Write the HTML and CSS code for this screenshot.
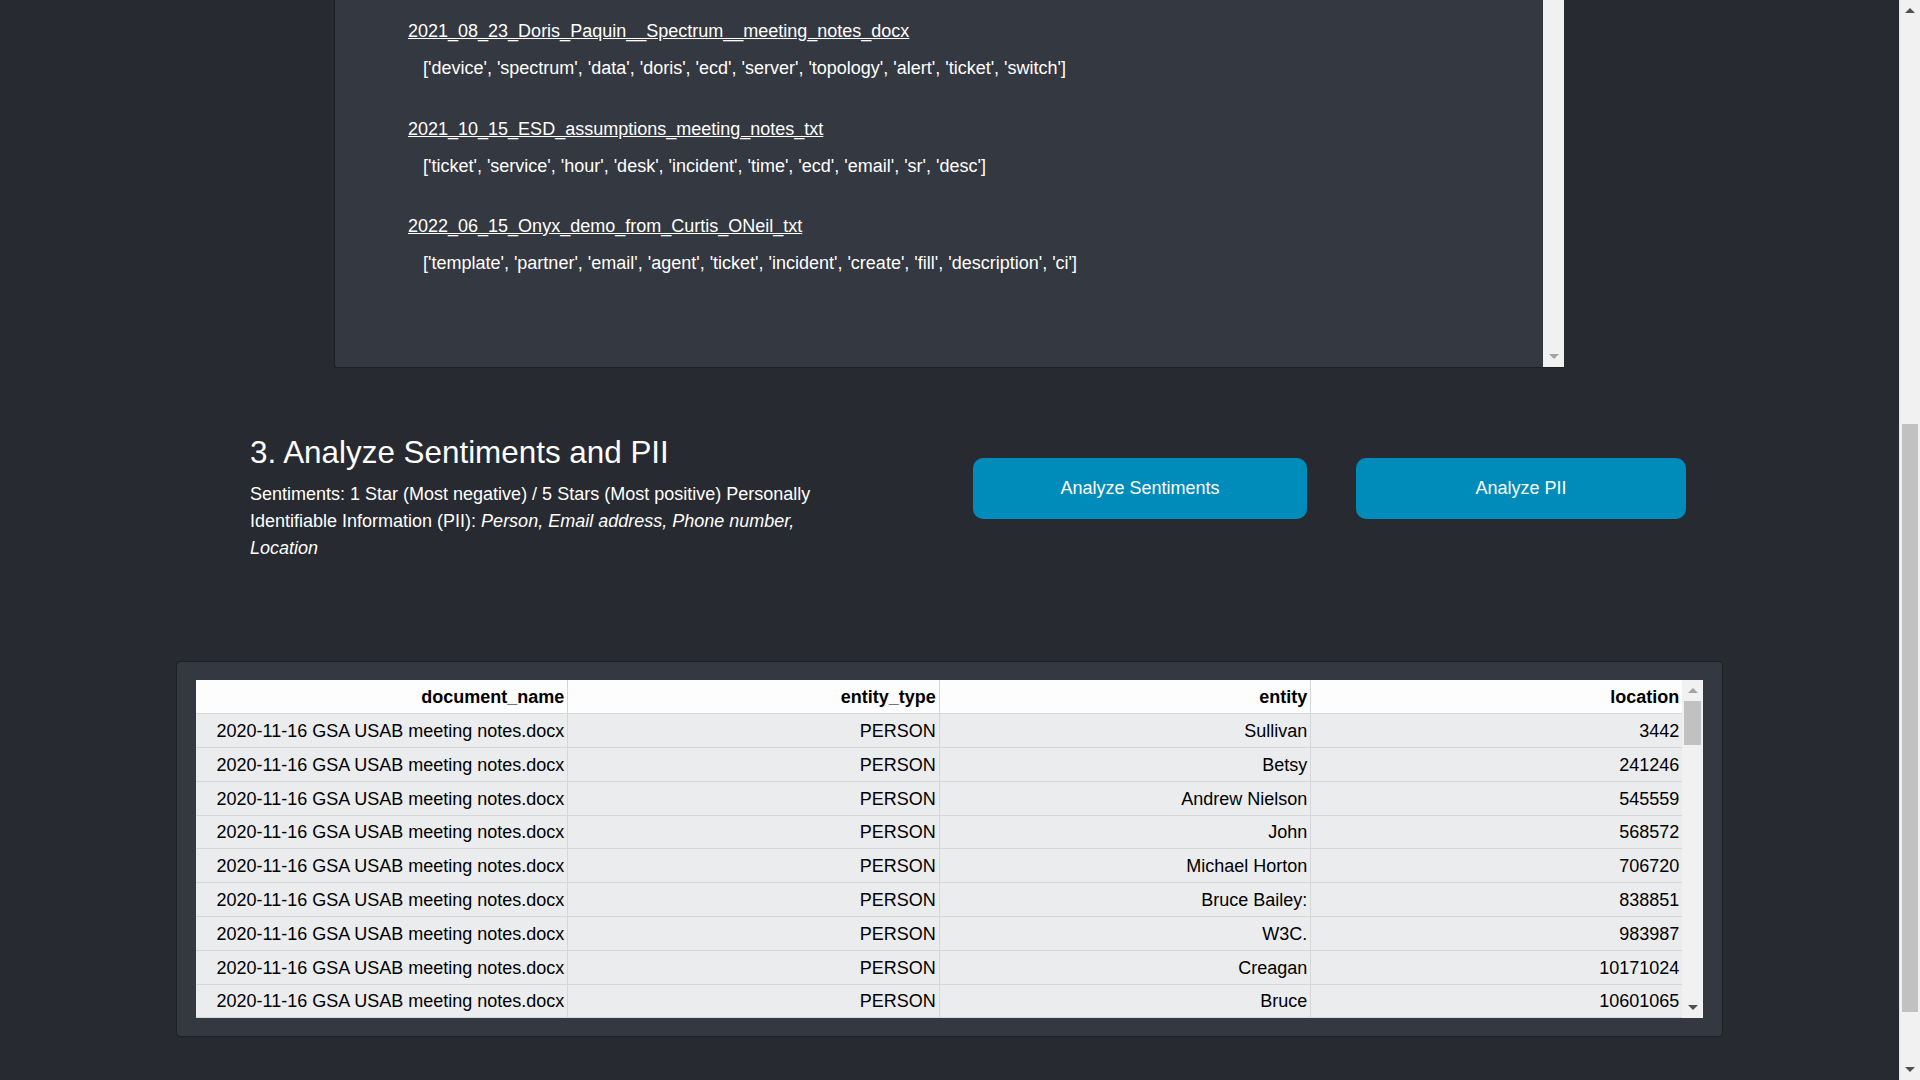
FILE: index.html
```html
<!DOCTYPE html>
<html lang="en">
<head>
<meta charset="utf-8">
<title>Analyze Sentiments and PII</title>
<link rel="stylesheet" href="styles.css">
</head>
<body>
<div class="page">
  <main class="main">
    <section class="topics">
      <div class="topics-body">
        <div class="topic">
          <a class="topic-link" href="#">2021_08_23_Doris_Paquin__Spectrum__meeting_notes_docx</a>
          <p class="topic-words">['device', 'spectrum', 'data', 'doris', 'ecd', 'server', 'topology', 'alert', 'ticket', 'switch']</p>
        </div>
        <div class="topic">
          <a class="topic-link" href="#">2021_10_15_ESD_assumptions_meeting_notes_txt</a>
          <p class="topic-words">['ticket', 'service', 'hour', 'desk', 'incident', 'time', 'ecd', 'email', 'sr', 'desc']</p>
        </div>
        <div class="topic">
          <a class="topic-link" href="#">2022_06_15_Onyx_demo_from_Curtis_ONeil_txt</a>
          <p class="topic-words">['template', 'partner', 'email', 'agent', 'ticket', 'incident', 'create', 'fill', 'description', 'ci']</p>
        </div>
      </div>
      <div class="vscroll vscroll-panel">
        <div class="vscroll-fill"></div>
        <div class="vscroll-btn"><span class="arrow down light"></span></div>
      </div>
    </section>

    <section class="analyze">
      <div class="analyze-intro">
        <h2 class="analyze-title">3. Analyze Sentiments and PII</h2>
        <p class="analyze-desc">Sentiments: 1 Star (Most negative) / 5 Stars (Most positive) Personally Identifiable Information (PII): <em>Person, Email address, Phone number, Location</em></p>
      </div>
      <div class="analyze-actions">
        <button class="btn btn-sentiments" type="button">Analyze Sentiments</button>
        <button class="btn btn-pii" type="button">Analyze PII</button>
      </div>
    </section>

    <section class="results">
      <div class="results-frame">
        <div class="results-table-wrap">
          <table class="results-table">
            <thead>
              <tr><th>document_name</th><th>entity_type</th><th>entity</th><th>location</th></tr>
            </thead>
            <tbody>
              <tr><td>2020-11-16 GSA USAB meeting notes.docx</td><td>PERSON</td><td>Sullivan</td><td>3442</td></tr>
              <tr><td>2020-11-16 GSA USAB meeting notes.docx</td><td>PERSON</td><td>Betsy</td><td>241246</td></tr>
              <tr><td>2020-11-16 GSA USAB meeting notes.docx</td><td>PERSON</td><td>Andrew Nielson</td><td>545559</td></tr>
              <tr><td>2020-11-16 GSA USAB meeting notes.docx</td><td>PERSON</td><td>John</td><td>568572</td></tr>
              <tr><td>2020-11-16 GSA USAB meeting notes.docx</td><td>PERSON</td><td>Michael Horton</td><td>706720</td></tr>
              <tr><td>2020-11-16 GSA USAB meeting notes.docx</td><td>PERSON</td><td>Bruce Bailey:</td><td>838851</td></tr>
              <tr><td>2020-11-16 GSA USAB meeting notes.docx</td><td>PERSON</td><td>W3C.</td><td>983987</td></tr>
              <tr><td>2020-11-16 GSA USAB meeting notes.docx</td><td>PERSON</td><td>Creagan</td><td>10171024</td></tr>
              <tr><td>2020-11-16 GSA USAB meeting notes.docx</td><td>PERSON</td><td>Bruce</td><td>10601065</td></tr>
            </tbody>
          </table>
        </div>
        <div class="vscroll vscroll-table">
          <div class="vscroll-btn"><span class="arrow up light"></span></div>
          <div class="vscroll-thumb thumb-table"></div>
          <div class="vscroll-fill"></div>
          <div class="vscroll-btn"><span class="arrow down"></span></div>
        </div>
      </div>
    </section>
  </main>

  <div class="vscroll vscroll-page">
    <div class="vscroll-btn"><span class="arrow up"></span></div>
    <div class="vscroll-thumb thumb-page"></div>
    <div class="vscroll-fill"></div>
    <div class="vscroll-btn"><span class="arrow down"></span></div>
  </div>
</div>
</body>
</html>
```

FILE: styles.css
```css
* { box-sizing: border-box; }

html, body {
  margin: 0;
  padding: 0;
  height: 100%;
}

body {
  background: #272a30;
  color: #ffffff;
  font-family: "Liberation Sans", Arial, sans-serif;
  font-size: 18px;
  overflow: hidden;
}

.page {
  display: flex;
  width: 1920px;
  height: 1080px;
}

.main {
  width: 1899px;
  height: 1080px;
  overflow: hidden;
}

/* ---------- top topics panel ---------- */
.topics {
  display: flex;
  width: 1230px;
  height: 368px;
  margin-left: 334px;
  background: #343841;
  border-left: 1px solid #1c1f24;
  border-bottom: 1px solid #1c1f24;
  border-bottom-left-radius: 3px;
}

.topics-body {
  flex: 1;
  padding: 18px 0 0 73px;
}

.topic {
  margin-bottom: 33.5px;
}

.topic-link {
  display: block;
  color: #ffffff;
  text-decoration: underline;
  line-height: 27px;
  width: max-content;
}

.topic-words {
  margin: 10px 0 0 15px;
  line-height: 27px;
}

/* ---------- scrollbars ---------- */
.vscroll {
  width: 21px;
  background: #f1f1f1;
  display: flex;
  flex-direction: column;
  flex-shrink: 0;
}

.vscroll-btn {
  height: 21px;
  display: flex;
  align-items: center;
  justify-content: center;
  flex-shrink: 0;
}

.vscroll-fill { flex: 1; }

.vscroll-thumb {
  margin: 0 2px;
  background: #c1c1c1;
  flex-shrink: 0;
}

.arrow {
  width: 0;
  height: 0;
  border-left: 5px solid transparent;
  border-right: 5px solid transparent;
}

.arrow.up { border-bottom: 5px solid #505050; }
.arrow.down { border-top: 5px solid #505050; }
.arrow.up.light { border-bottom-color: #a3a3a3; }
.arrow.down.light { border-top-color: #a3a3a3; }

.vscroll-panel { height: 367px; }

.vscroll-page {
  height: 1080px;
  border-left: 1px solid #e6e6e6;
}

.thumb-page {
  margin-top: 403px;
  height: 588px;
}

.thumb-table {
  height: 44px;
}

/* ---------- analyze section ---------- */
.analyze {
  display: flex;
  align-items: flex-start;
  margin: 66px 0 0 250px;
  width: 1436px;
}

.analyze-intro {
  width: 600px;
}

.analyze-title {
  margin: 0;
  font-size: 31.4px;
  font-weight: 400;
  line-height: 1.2;
}

.analyze-desc {
  margin: 9px 0 0;
  line-height: 27px;
}

.analyze-desc em { font-style: italic; }

.analyze-actions {
  display: flex;
  gap: 49px;
  margin: 24px 0 0 123px;
}

.btn {
  height: 61px;
  border: none;
  border-radius: 10px;
  background: #008cba;
  color: #ffffff;
  font-family: "Liberation Sans", Arial, sans-serif;
  font-size: 18px;
  padding: 0;
  cursor: pointer;
}

.btn-sentiments { width: 334px; }
.btn-pii { width: 330px; }

/* ---------- results table ---------- */
.results {
  margin: 99px 0 0 176px;
  width: 1547px;
  background: #343841;
  border: 1px solid #1c1f24;
  border-radius: 4px;
  padding: 18px 19px;
}

.results-frame {
  display: flex;
  height: 338px;
}

.results-table-wrap {
  flex: 1;
  overflow: hidden;
  background: #ebecee;
}

.results-table {
  width: 100%;
  border-collapse: collapse;
  table-layout: fixed;
  color: #000000;
}

.results-table th,
.results-table td {
  height: 34px;
  padding: 1px 2.7px 0 0;
  text-align: right;
  line-height: 20px;
  white-space: nowrap;
  border-bottom: 1px solid #d5d6d9;
  border-right: 1px solid #d5d6d9;
}

.results-table td {
  height: 33.8px;
  background: #ebecee;
}

.results-table th:last-child,
.results-table td:last-child {
  border-right: none;
}

.results-table th {
  background: #fdfdfd;
  font-weight: 700;
}
```
